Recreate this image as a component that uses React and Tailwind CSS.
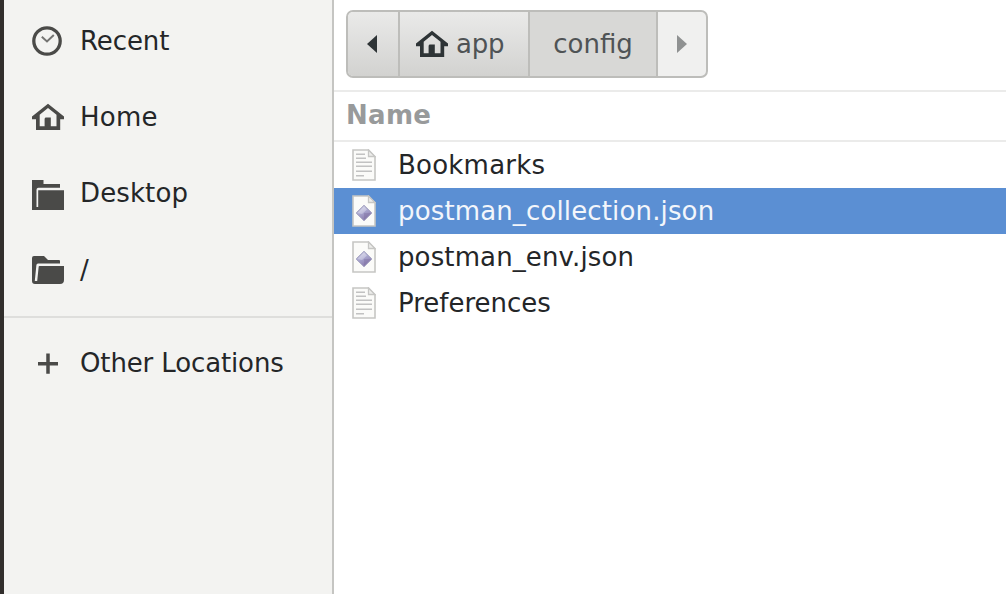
function RecentIcon() {
  return (
    <svg className="size-8 shrink-0" viewBox="0 0 32 32" fill="none">
      <circle cx="15" cy="16" r="13.2" stroke="#4a4a48" strokeWidth="3.3" />
      <path d="M9.8 11.8L15 16.4L21.8 10" stroke="#747472" strokeWidth="2" />
    </svg>
  );
}

function HomeIcon({ className }) {
  return (
    <svg className={className} viewBox="0 0 32 32" fill="none">
      <path
        fill="currentColor"
        fillRule="evenodd"
        d="M16 2.8L32 15.4V18.2H28.2V29H4V18.2H0V15.4ZM16 7L7.7 13.8V25.3H12.6V18.2C12.6 17.1 13.2 16.6 14.2 16.6H18.8V25.3H24.5V13.8Z"
      />
    </svg>
  );
}

function DesktopIcon() {
  return (
    <svg className="h-[34px] w-8 shrink-0" viewBox="0 0 32 34">
      <path fill="#4a4a48" d="M0 4H11.5V8H28V11.7H6.5C5 11.7 4.5 12.7 4.5 14V31H28V34H0Z" />
      <path fill="#4a4a48" d="M6.2 14.2H32V34H0V31H6.2Z" />
    </svg>
  );
}

function FolderIcon() {
  return (
    <svg className="size-8 shrink-0" viewBox="0 0 32 32">
      <path
        fill="#4a4a48"
        d="M2 2H12L16 6H27Q28 6 28 7V9.5H6Q4.6 9.5 4.4 11L2.8 27H5.2L6.7 12.5Q6.8 12 7.5 12H32V26Q32 30 28 30H3Q0 30 0 27V4Q0 2 2 2Z"
      />
    </svg>
  );
}

function PlusIcon() {
  return (
    <svg className="size-8 shrink-0" viewBox="0 0 32 32">
      <path d="M16 6.6V26.8M6 16.8H26" stroke="#4a4a48" strokeWidth="3.5" />
    </svg>
  );
}

function PageShape() {
  return (
    <>
      <path d="M1 1H16.5L23 8V31H1Z" fill="#fbfbf9" stroke="#c6c6c4" strokeWidth="1.6" />
      <path d="M16.5 1V7.5H23Z" fill="#ededeb" stroke="#c6c6c4" strokeWidth="1.3" />
    </>
  );
}

function TextFileIcon() {
  return (
    <svg className="h-8 w-6 shrink-0" viewBox="0 0 24 32">
      <PageShape />
      <path
        d="M4 5.2H13M4 9.2H14M4 13.2H20M4 17.2H20M4 22.2H20M4 26.8H12"
        stroke="#c2c2c2"
        strokeWidth="1.4"
      />
    </svg>
  );
}

function JsonFileIcon() {
  return (
    <svg className="h-8 w-6 shrink-0" viewBox="0 0 24 32">
      <defs>
        <linearGradient id="gem" x1="0" y1="0" x2="0.5" y2="1">
          <stop offset="0" stopColor="#dcdcec" />
          <stop offset="0.5" stopColor="#aaa8d0" />
          <stop offset="1" stopColor="#8a7bad" />
        </linearGradient>
      </defs>
      <PageShape />
      <path d="M12 10.3L19.8 18L12 25.7L4.2 18Z" fill="url(#gem)" stroke="#9c9abc" strokeWidth="1" strokeLinejoin="round" />
      <path d="M12 18L19.2 18L12 25Z" fill="#796a9b" opacity="0.35" />
      <path d="M5.5 18L12 11.5L15 14.5L10 19Z" fill="#ffffff" opacity="0.3" />
    </svg>
  );
}

const places = [
  { label: "Recent", icon: <RecentIcon />, row: "h-[76px]", text: "tracking-[-0.1px]" },
  { label: "Home", icon: <HomeIcon className="size-8 shrink-0 text-[#4a4a48]" />, row: "h-[76px]", text: "tracking-[0.25px]" },
  { label: "Desktop", icon: <DesktopIcon />, row: "h-[76px]", text: "tracking-[0.12px]" },
  { label: "/", icon: <FolderIcon />, row: "h-[78px]", text: "" },
];

const files = [
  { name: "Bookmarks", icon: <TextFileIcon />, text: "tracking-[0.22px]" },
  { name: "postman_collection.json", icon: <JsonFileIcon />, text: "tracking-[0.14px]", selected: true },
  { name: "postman_env.json", icon: <JsonFileIcon />, text: "tracking-[0.12px]" },
  { name: "Preferences", icon: <TextFileIcon />, text: "" },
];

export default function App() {
  return (
    <div className="flex h-[594px] w-[1006px] overflow-hidden bg-white font-['DejaVu_Sans',sans-serif] text-[26px] leading-[30px] text-[#242628]">
      <aside className="w-[334px] shrink-0 border-r-2 border-l-4 border-r-[#c5c5c2] border-l-[#312e2c] bg-[#f3f3f1] pt-[3px]">
        <nav>
          {places.map((p) => (
            <div key={p.label} className={`flex items-center gap-4 pl-7 ${p.row}`}>
              {p.icon}
              <span className={p.text}>{p.label}</span>
            </div>
          ))}
        </nav>
        <hr className="mt-[7px] h-0 border-t-2 border-[#dededc]" />
        <div className="mt-[7px] flex h-[76px] items-center gap-4 pl-7">
          <PlusIcon />
          <span className="tracking-[-0.13px]">Other Locations</span>
        </div>
      </aside>

      <main className="min-w-0 flex-1">
        <div className="flex h-[90px] pt-[10px] pl-3">
          <div className="flex h-[68px] w-[362px] overflow-hidden rounded-[7px] border-2 border-[#bdbdba] bg-[#f0f0ef] text-[#4f5355]">
            <button className="flex w-[52px] items-center justify-center border-r-2 border-[#bdbdba] bg-linear-to-b from-[#eaeae9] to-[#d2d2d0] pr-[3px]">
              <svg className="h-5 w-3" viewBox="0 0 12 20">
                <path d="M11 1V19L1 10Z" fill="#2e3436" />
              </svg>
            </button>
            <button className="flex w-[130px] items-center gap-2 border-r-2 border-[#bdbdba] bg-linear-to-b from-[#eaeae9] to-[#d2d2d0] pl-4">
              <HomeIcon className="size-8 shrink-0 text-[#2e3436]" />
              <span className="tracking-[-0.2px]">app</span>
            </button>
            <button className="flex w-[128px] items-center justify-center border-r-2 border-[#bdbdba] bg-[#d8d8d6]">config</button>
            <button className="flex flex-1 items-center justify-center">
              <svg className="h-5 w-3" viewBox="0 0 12 20">
                <path d="M1 1V19L11 10Z" fill="#8f9191" />
              </svg>
            </button>
          </div>
        </div>
        <div className="flex h-[52px] items-center border-y-2 border-[#ebebea] pb-0.5 pl-3 font-bold tracking-[0.3px] text-[#989a9b]">
          Name
        </div>
        <ul>
          {files.map((f) => (
            <li
              key={f.name}
              className={`flex h-[46px] items-center gap-[22px] pl-[18px] ${f.selected ? "bg-[#5b8fd3] text-[#f3f6fb]" : ""}`}
            >
              {f.icon}
              <span className={f.text}>{f.name}</span>
            </li>
          ))}
        </ul>
      </main>
    </div>
  );
}
